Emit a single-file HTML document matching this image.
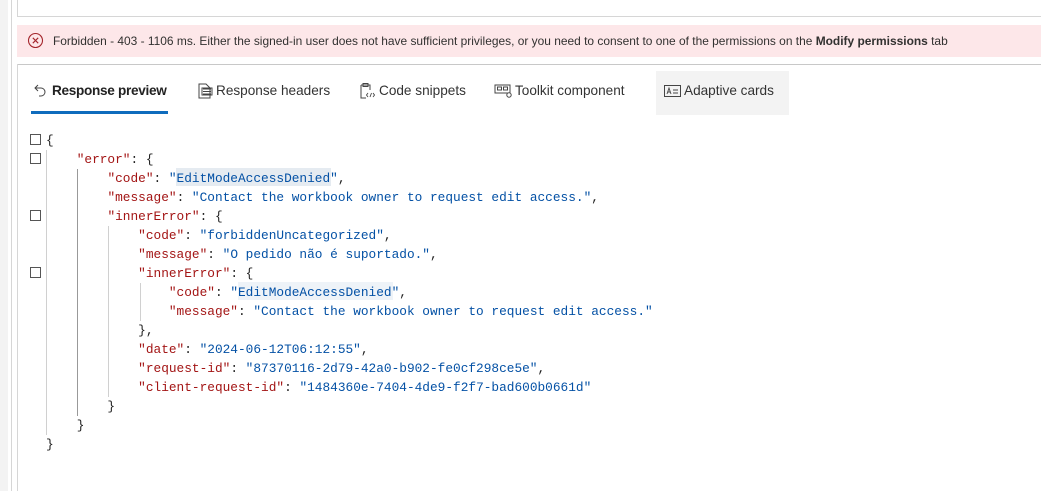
<!DOCTYPE html>
<html><head><meta charset="utf-8"><style>
body{margin:0;width:1041px;height:491px;background:#fff;position:relative;overflow:hidden;font-family:"Liberation Sans",sans-serif;}
.abs{position:absolute}
.code{position:absolute;left:46px;top:131px;font-family:"Liberation Mono",monospace;font-size:12.8px;line-height:19px;white-space:pre;color:#222}
.k{color:#a31515}.s{color:#0451a5}
.cb{position:absolute;left:30px;width:9px;height:9px;border:1px solid #555;background:#fff}
.g{position:absolute;width:1px;background:#d0d0d0}
.tab{position:absolute;top:83px;font-size:13.6px;color:#333}
</style></head><body>
<div class="abs" style="left:0;top:0;width:8px;height:491px;background:#f3f3f3"></div>
<div class="abs" style="left:11px;top:0;width:1px;height:491px;background:#d6d6d6"></div>
<div class="abs" style="left:17px;top:0;width:1px;height:17px;background:#d6d6d6"></div>
<div class="abs" style="left:17px;top:16px;width:1024px;height:1px;background:#d6d6d6"></div>
<div class="abs" style="left:17px;top:25px;width:1024px;height:32px;background:#fde7e9"></div>
<svg class="abs" style="left:27px;top:32px" width="17" height="17" viewBox="0 0 17 17"><circle cx="8.5" cy="8.5" r="7" fill="none" stroke="#a4262c" stroke-width="1.1"/><path d="M5.8 5.8L11.2 11.2M11.2 5.8L5.8 11.2" stroke="#a4262c" stroke-width="1.1"/></svg>
<div class="abs" style="left:53px;top:34px;font-size:11.95px;color:#323130">Forbidden - 403 - 1106 ms. Either the signed-in user does not have sufficient privileges, or you need to consent to one of the permissions on the <b style="font-weight:600">Modify permissions</b> tab</div>
<div class="abs" style="left:17px;top:64px;width:1024px;height:1px;background:#c8c8c8"></div>
<div class="abs" style="left:17px;top:64px;width:1px;height:427px;background:#d6d6d6"></div>
<div class="abs" style="left:656px;top:71px;width:133px;height:44px;background:#f3f3f3"></div>
<div class="abs" style="left:31px;top:111px;width:137px;height:3px;background:#0f6cbd"></div>
<svg class="abs" style="left:33px;top:83px" width="14" height="16" viewBox="0 0 14 16"><path d="M5 2L2 5L5 8M2 5H8a4 4 0 0 1 0 8H6" fill="none" stroke="#444" stroke-width="1"/></svg>
<div class="tab" style="left:52px;color:#222;font-weight:600;letter-spacing:-0.3px">Response preview</div>
<svg class="abs" style="left:196px;top:82px" width="18" height="18" viewBox="0 0 18 18"><path d="M3 2H10L14 6V16H3Z" fill="none" stroke="#444"/><path d="M7 7H15M7 9.5H15M7 12H15" stroke="#444"/><rect x="6" y="6" width="10" height="7" fill="none" stroke="#444"/></svg>
<div class="tab" style="left:216px">Response headers</div>
<svg class="abs" style="left:357px;top:82px" width="20" height="18" viewBox="0 0 20 18"><path d="M4 3H13V8M4 3V16H9" fill="none" stroke="#444"/><rect x="6" y="1.5" width="5" height="3" fill="none" stroke="#444"/><path d="M11 11L9.5 13L11 15M14.5 11L13 15M16 11L17.5 13L16 15" fill="none" stroke="#444" stroke-width="0.9"/></svg>
<div class="tab" style="left:379px">Code snippets</div>
<svg class="abs" style="left:494px;top:84px" width="20" height="14" viewBox="0 0 20 14"><rect x="1" y="1" width="15" height="8" fill="none" stroke="#444"/><rect x="3.5" y="3" width="4" height="3" fill="none" stroke="#444"/><rect x="9.5" y="3" width="4" height="3" fill="none" stroke="#444"/><circle cx="15" cy="11" r="2.2" fill="#fff" stroke="#444"/></svg>
<div class="tab" style="left:515px">Toolkit component</div>
<svg class="abs" style="left:664px;top:85px" width="18" height="12" viewBox="0 0 18 12"><rect x="0.5" y="0.5" width="16" height="11" fill="none" stroke="#444"/><path d="M3 9L5 3L7 9M3.8 7H6.2M9 5H14M9 8H14" fill="none" stroke="#444" stroke-width="0.9"/></svg>
<div class="tab" style="left:684px">Adaptive cards</div>

<div class="cb" style="top:134px"></div>
<div class="cb" style="top:153px"></div>
<div class="cb" style="top:210px"></div>
<div class="cb" style="top:267px"></div>
<div class="g" style="left:46px;top:150px;height:285px"></div>
<div class="g" style="left:77px;top:169px;height:247px;background:#999"></div>
<div class="g" style="left:108px;top:226px;height:171px"></div>
<div class="g" style="left:140px;top:283px;height:38px"></div>
<div class="abs" style="left:176px;top:168px;width:155px;height:18px;background:#e5ebf1"></div>
<div class="abs" style="left:238px;top:282px;width:155px;height:18px;background:#eef3f8"></div>
<div class="code">{
    <span class="k">"error"</span>: {
        <span class="k">"code"</span>: <span class="s">"EditModeAccessDenied"</span>,
        <span class="k">"message"</span>: <span class="s">"Contact the workbook owner to request edit access."</span>,
        <span class="k">"innerError"</span>: {
            <span class="k">"code"</span>: <span class="s">"forbiddenUncategorized"</span>,
            <span class="k">"message"</span>: <span class="s">"O pedido não é suportado."</span>,
            <span class="k">"innerError"</span>: {
                <span class="k">"code"</span>: <span class="s">"EditModeAccessDenied"</span>,
                <span class="k">"message"</span>: <span class="s">"Contact the workbook owner to request edit access."</span>
            },
            <span class="k">"date"</span>: <span class="s">"2024-06-12T06:12:55"</span>,
            <span class="k">"request-id"</span>: <span class="s">"87370116-2d79-42a0-b902-fe0cf298ce5e"</span>,
            <span class="k">"client-request-id"</span>: <span class="s">"1484360e-7404-4de9-f2f7-bad600b0661d"</span>
        }
    }
}</div>
</body></html>
